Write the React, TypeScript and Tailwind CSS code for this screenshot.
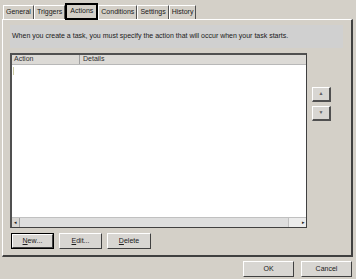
import React from "react";

const tabs = ["General", "Triggers", "Actions", "Conditions", "Settings", "History"];

function Btn({
  label,
  hot,
  w,
  def,
}: {
  label: string;
  hot?: number;
  w: string;
  def?: boolean;
}) {
  const chars = label.split("");
  return (
    <div className={`${w} h-[16px] ${def ? "border border-black" : ""}`}>
      <div className="w-full h-full bg-[#d8d6d2] border-t border-l border-white border-r border-b border-r-[#404040] border-b-[#404040] flex items-center justify-center text-[#202020]">
        {chars.map((c, i) => (
          <span key={i} className={i === hot ? "underline" : ""}>
            {c}
          </span>
        ))}
      </div>
    </div>
  );
}

function SmallBtn({ arrow }: { arrow: string }) {
  return (
    <div className="w-[19px] h-[15px] bg-[#d8d6d2] border-t border-l border-white border-r-2 border-b-2 border-r-[#505050] border-b-[#505050] flex items-center justify-center text-[5px] text-[#606060]">
      {arrow}
    </div>
  );
}

export default function App() {
  return (
    <div
      className="w-[356px] h-[279px] bg-[#d4d0c8] text-[7px] text-[#1a1a1a] overflow-hidden"
      style={{ fontFamily: '"Liberation Sans", Arial, sans-serif' }}
    >
      {/* tab strip */}
      <div className="flex items-end h-[19px] pl-[3px] pt-[2px]">
        {tabs.map((t) =>
          t === "Actions" ? (
            <div
              key={t}
              className="h-[17px] px-[3px] border-2 border-black flex items-center bg-[#d4d0c8] -mb-[1px] z-10"
            >
              {t}
            </div>
          ) : (
            <div
              key={t}
              className="h-[14px] px-[2px] border-t border-l border-white border-r border-r-[#505050] flex items-center"
            >
              {t}
            </div>
          )
        )}
      </div>

      {/* panel */}
      <div className="ml-[2px] w-[351px] h-[238px] border-t border-l border-white border-r-2 border-b-2 border-r-[#404040] border-b-[#404040] flex flex-col">
        <div className="ml-[7px] mt-[5px] w-[333px] h-[23px] bg-[#d0d0d0] flex items-center pl-[2px]">
          When you create a task, you must specify the action that will occur when your task starts.
        </div>

        <div className="flex mt-[5px]">
          {/* list */}
          <div className="ml-[7px] w-[297px] h-[175px] border-t-2 border-l-2 border-t-[#505050] border-l-[#505050] border-r border-b border-r-[#404040] border-b-[#404040] bg-white flex flex-col">
            <div className="flex h-[10px] bg-[#dcdad6] border-b border-[#b8b8b8] text-[#303030]">
              <div className="w-[68px] pl-[2px] border-r border-[#a0a0a0] flex items-center">Action</div>
              <div className="pl-[3px] flex items-center">Details</div>
            </div>
            <div className="flex-1">
              <div className="ml-[1px] mt-[2px] w-[1px] h-[8px] bg-[#c8c8a0]" />
            </div>
            <div className="h-[10px] flex bg-[#dedede] border-t border-[#c0c0c0]">
              <div className="w-[8px] flex items-center justify-center text-[5px] border-r border-[#a0a0a0] bg-[#d8d6d2]">◂</div>
              <div className="flex-1" />
              <div className="w-[18px] flex items-center justify-end pr-[1px] text-[5px] bg-[#ececec] border-l border-[#c0c0c0]">▸</div>
            </div>
          </div>

          {/* up/down */}
          <div className="ml-[5px] mt-[34px] flex flex-col gap-[4px]">
            <SmallBtn arrow="▲" />
            <SmallBtn arrow="▼" />
          </div>
        </div>

        <div className="flex gap-[5px] ml-[8px] mt-[5px]">
          <Btn label="New..." hot={0} w="w-[43px]" def />
          <Btn label="Edit..." hot={0} w="w-[43px]" />
          <Btn label="Delete" hot={0} w="w-[44px]" />
        </div>
      </div>

      {/* footer */}
      <div className="flex justify-end gap-[7px] pr-[4px] mt-[4px]">
        <Btn label="OK" w="w-[51px]" />
        <Btn label="Cancel" w="w-[51px]" />
      </div>
    </div>
  );
}
